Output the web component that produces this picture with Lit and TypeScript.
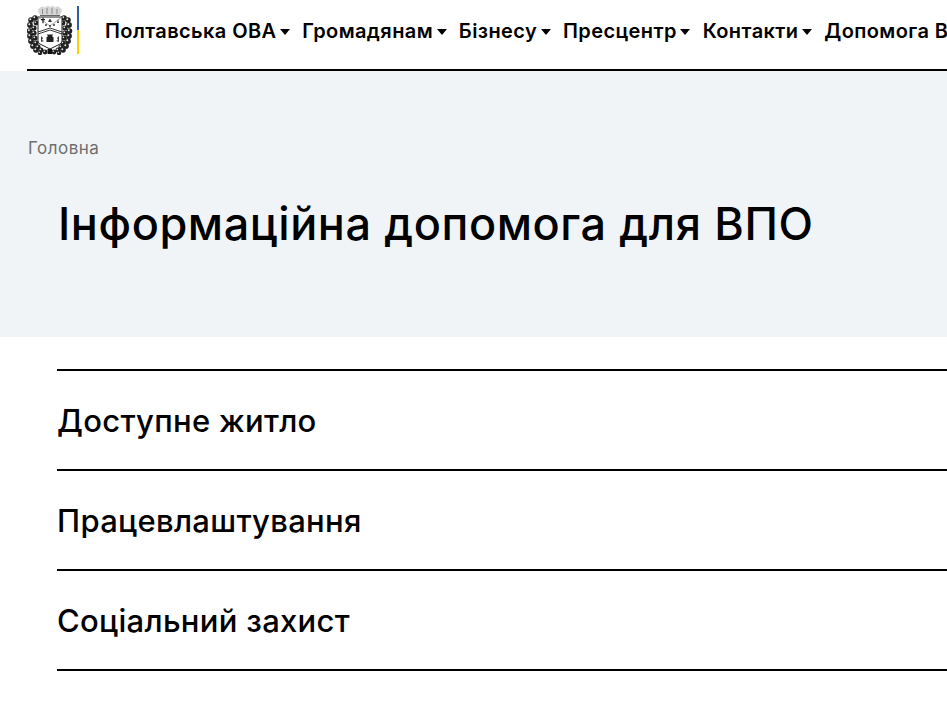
import { LitElement, html, css, svg } from "lit";
import { customElement } from "lit/decorators.js";

const NAV = ["Полтавська ОВА", "Громадянам", "Бізнесу", "Пресцентр", "Контакти", "Допомога ВПО"];
const ITEMS = ["Доступне житло", "Працевлаштування", "Соціальний захист"];

const left: [number, number, number][] = [
  [8, 13, 2.8], [4, 15, 2.8], [9, 18, 2.4], [3, 20, 2.9], [7, 23, 2.6], [2.5, 26, 2.8], [7, 28, 2.6], [3, 31, 2.9],
  [8, 33, 2.6], [4, 36, 2.9], [9, 38, 2.6], [6, 41, 2.9], [11, 42, 2.6], [9, 45, 2.8], [14, 45, 2.5], [13, 48, 2.2], [18, 47, 2.4],
];
const blobs = [...left, ...left.map(([x, y, r]) => [45 - x, y, r] as [number, number, number])];

const crest = svg`
  <path d="M13 10 C10 6 11 3 13 3 C14 1 17 1 18 3 C19 0.5 22 0.5 23 2.5 C24 0.5 27 0.5 28 3 C29 1 32 1 33 3 C35 3 36 6 33 10 Z" fill="#d6d6d6"/>
  <path d="M15.5 4v5M20 3v6M25 3v6M30 4v5" stroke="#8a8a8a" stroke-width="1"/>
  <path d="M13 10.5h20" stroke="#666" stroke-width="1"/>
  ${blobs.map(([x, y, r]) => svg`<circle cx=${x} cy=${y} r=${r} fill="#202020"/><circle cx=${x - 0.7} cy=${y - 0.7} r=${r * 0.34} fill="#e6e6e6"/>`)}
  <path d="M11 12 H35 V36 Q35 39 31 40 L23 44 L15 40 Q11 39 11 36 Z" fill="#fff" stroke="#222" stroke-width="1"/>
  <path d="M11 12 L23 21 L35 12" fill="none" stroke="#777" stroke-width="0.7"/>
  <path d="M11 27 L23 23 L35 27 M11 29 L23 25 L35 29" fill="none" stroke="#222" stroke-width="0.9"/>
  <path d="M14 14h1.4v-1.400h1.200v1.400h1.400v1.200h-1.400v3h-1.200v-3h-1.400z" fill="#222"/>
  <path d="M23 13.500l2 3.500h-4z" fill="#333"/>
  <path d="M31 14l1 4h-2z" fill="#333"/>
  <circle cx="19" cy="20" r="0.9" fill="#222"/><circle cx="23" cy="21" r="0.9" fill="#222"/><circle cx="27" cy="20" r="0.9" fill="#222"/>
  <path d="M19.500 37v-5h1v-3h1v1h1v-1h1v1h1v-1h1v3h1v5z" fill="#222"/>
  <path d="M14 31l2 2-1 2 2 1-3 1zM32 31l-2 2 1 2-2 1 3 1z" fill="#444"/>
  <path d="M20.500 44h4.500v5h-4.500z" fill="#111"/>
`;

@customElement("app-root")
export class AppRoot extends LitElement {
  static styles = css`
    :host {
      display: block;
      width: 947px;
      height: 711px;
      overflow: hidden;
      background: #fff;
      color: #000;
      font-family: Inter, "Liberation Sans", sans-serif;
    }
    .header {
      display: flex;
      align-items: flex-start;
      margin-left: 27px;
      height: 69px;
      border-bottom: 2px solid #000;
      white-space: nowrap;
    }
    .logo {
      display: block;
      width: 46px;
      height: 50px;
      margin-top: 5px;
      flex: none;
    }
    .flag {
      flex: none;
      width: 2px;
      height: 48px;
      margin: 6px 0 0 4px;
      background: linear-gradient(#2f5da6 50%, #ffcf00 50%);
    }
    nav {
      display: flex;
      gap: 12.3px;
      margin-left: 26px;
      height: 61px;
      align-items: center;
    }
    .nav-item {
      display: flex;
      align-items: center;
      gap: 3.5px;
      font-size: 20px;
      font-weight: 600;
      letter-spacing: 0.4px;
    }
    .caret {
      width: 0;
      height: 0;
      border-left: 5px solid transparent;
      border-right: 5px solid transparent;
      border-top: 6px solid #000;
      margin-top: 3px;
    }
    .hero {
      background: #f1f4f7;
      height: 266px;
      padding: 67px 0 0 28px;
      box-sizing: border-box;
    }
    .crumb {
      font-size: 17px;
      line-height: 20px;
      letter-spacing: 0.5px;
      color: #6e6e6e;
    }
    h1 {
      margin: 39px 0 0 30px;
      font-size: 45px;
      line-height: 54px;
      font-weight: 450;
      letter-spacing: 0.6px;
      white-space: nowrap;
    }
    .list {
      margin: 32px 0 0 57px;
      border-top: 2px solid #000;
    }
    .row {
      height: 97px;
      padding-top: 1px;
      border-bottom: 2px solid #000;
      display: flex;
      align-items: center;
      font-size: 31px;
      font-weight: 500;
      letter-spacing: 0.3px;
    }
  `;

  render() {
    return html`
      <header class="header">
        <svg class="logo" viewBox="0 0 46 50">${crest}</svg>
        <div class="flag"></div>
        <nav>
          ${NAV.map((n) => html`<div class="nav-item">${n}<span class="caret"></span></div>`)}
        </nav>
      </header>
      <section class="hero">
        <div class="crumb">Головна</div>
        <h1>Інформаційна допомога для ВПО</h1>
      </section>
      <div class="list">
        ${ITEMS.map((i) => html`<div class="row">${i}</div>`)}
      </div>
    `;
  }
}
